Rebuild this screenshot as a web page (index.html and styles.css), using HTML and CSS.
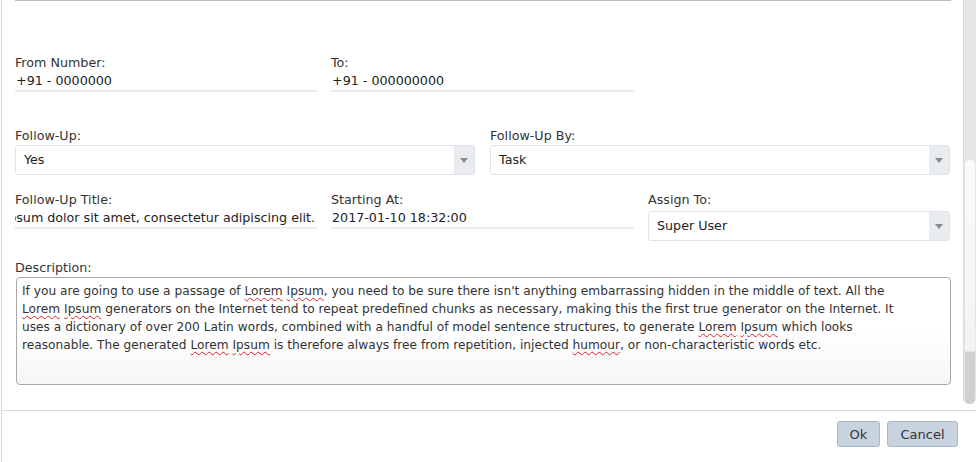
FILE: index.html
```html
<!DOCTYPE html>
<html>
<head>
<meta charset="utf-8">
<link rel="stylesheet" href="styles.css">
</head>
<body>
<div class="modal">
  <div class="body">
    <div class="content">
      <div class="topline"></div>
      <div class="row three row-first">
        <div class="field">
          <div class="label">From Number:</div>
          <div class="value">+91 - 0000000</div>
        </div>
        <div class="field">
          <div class="label">To:</div>
          <div class="value">+91 - 000000000</div>
        </div>
      </div>
      <div class="row two row-second">
        <div class="field">
          <div class="label">Follow-Up:</div>
          <div class="select"><span class="sel-text">Yes</span><span class="sel-arrow"><i class="tri"></i></span></div>
        </div>
        <div class="field">
          <div class="label">Follow-Up By:</div>
          <div class="select"><span class="sel-text">Task</span><span class="sel-arrow"><i class="tri"></i></span></div>
        </div>
      </div>
      <div class="row three row-third">
        <div class="field">
          <div class="label">Follow-Up Title:</div>
          <div class="value scrolled"><span>Lorem ipsum dolor sit amet, consectetur adipiscing elit.</span></div>
        </div>
        <div class="field">
          <div class="label">Starting At:</div>
          <div class="value">2017-01-10 18:32:00</div>
        </div>
        <div class="field">
          <div class="label">Assign To:</div>
          <div class="select sel-assign"><span class="sel-text">Super User</span><span class="sel-arrow"><i class="tri"></i></span></div>
        </div>
      </div>
      <div class="desc">
        <div class="label">Description:</div>
        <div class="textarea">If you are going to use a passage of <span class="sp">Lorem</span> <span class="sp">Ipsum</span>, you need to be sure there isn't anything embarrassing hidden in the middle of text. All the <span class="sp">Lorem</span> <span class="sp">Ipsum</span> generators on the Internet tend to repeat predefined chunks as necessary, making this the first true generator on the Internet. It uses a dictionary of over 200 Latin words, combined with a handful of model sentence structures, to generate <span class="sp">Lorem</span> <span class="sp">Ipsum</span> which looks reasonable. The generated <span class="sp">Lorem</span> <span class="sp">Ipsum</span> is therefore always free from repetition, injected <span class="sp">humour</span>, or non-characteristic words etc.</div>
      </div>
    </div>
    <div class="scrollbar"><div class="track"><div class="thumb"></div></div></div>
  </div>
  <div class="footer">
    <button class="btn btn-ok">Ok</button>
    <button class="btn btn-cancel">Cancel</button>
  </div>
</div>
</body>
</html>
```

FILE: styles.css
```css
html, body {
  margin: 0;
  padding: 0;
  background: #fff;
}
body {
  font-family: "DejaVu Sans", sans-serif;
  font-size: 12.7px;
  color: #333;
  width: 976px;
  height: 462px;
  overflow: hidden;
}
.modal {
  height: 462px;
  display: flex;
  flex-direction: column;
  border-left: 1px solid #d3d6db;
  margin-left: 1px;
  box-sizing: border-box;
}
.body {
  height: 410px;
  display: flex;
  flex-direction: row;
}
.content {
  flex: 1;
  padding: 0 12px 0 13px;
}
.topline {
  height: 0;
  border-top: 1px solid #bdbdbd;
  margin-bottom: 54px;
}
.row {
  display: grid;
}
.row.three {
  grid-template-columns: 302px 303px 302px;
  column-gap: 14px;
}
.row.two {
  grid-template-columns: 460px 460px;
  column-gap: 15px;
}
.row-second {
  margin-top: 36px;
}
.row-third {
  margin-top: 17px;
}
.field {
  display: flex;
  flex-direction: column;
  min-width: 0;
}
.label {
  line-height: 16px;
  color: #333;
  white-space: nowrap;
}
.value {
  line-height: 18px;
  color: #222;
  border-bottom: 2px solid #ebebeb;
  white-space: nowrap;
  padding-left: 1px;
  margin-top: 1px;
}
.scrolled {
  display: flex;
  justify-content: flex-end;
  overflow: hidden;
  padding-right: 2px;
}
.scrolled span {
  flex: none;
}
.select {
  display: flex;
  height: 28px;
  margin-top: 1px;
  border: 1px solid #dfe2e6;
  border-radius: 3px;
  background: #fff;
  overflow: hidden;
}
.sel-assign {
  margin-top: 3px;
}
.sel-text {
  flex: 1;
  line-height: 28px;
  padding-left: 8px;
  color: #222;
}
.sel-arrow {
  width: 20px;
  background: #e9ecef;
  display: flex;
  align-items: center;
  justify-content: center;
}
.tri {
  width: 0;
  height: 0;
  border-left: 4px solid transparent;
  border-right: 4px solid transparent;
  border-top: 5px solid #8a8a8a;
  margin-top: 1px;
}
.desc {
  margin-top: 19px;
}
.textarea {
  margin-top: 1px;
  height: 102px;
  margin-left: 1px;
  border: 1px solid #a9a9a9;
  border-radius: 4px;
  padding: 4px 48px 0 5px;
  font-size: 12.2px;
  line-height: 18px;
  color: #333;
  background: linear-gradient(to bottom, #ffffff 0%, #ffffff 50%, #f6f6f6 100%);
}
.sp {
  text-decoration: underline wavy #e02020;
  text-decoration-thickness: 1px;
  text-underline-offset: 2px;
}
.scrollbar {
  width: 13px;
  flex: none;
  padding-bottom: 6px;
}
.track {
  height: 100%;
  box-sizing: border-box;
  background: #e6e6e6;
  border-left: 1px solid #d8d8d8;
  border-radius: 0 0 6px 6px;
  position: relative;
}
.thumb {
  position: absolute;
  left: 1px;
  right: 1px;
  top: 160px;
  bottom: 0;
  border-radius: 6px;
  background: linear-gradient(to bottom, #fafafa 0%, #f3f3f3 78%, #cfcfcf 79%, #cfcfcf 100%);
}
.footer {
  flex: 1;
  border-top: 1px solid #d9d9d9;
  display: flex;
  justify-content: flex-end;
  align-items: flex-start;
  padding: 10px 18px 0 0;
  gap: 7px;
}
.btn {
  font-family: "DejaVu Sans", sans-serif;
  font-size: 13px;
  height: 26px;
  color: #333;
  background: #c8d3e0;
  border: 1px solid #a9b7c8;
  border-radius: 3px;
  padding: 0;
  margin: 0;
}
.btn-ok {
  width: 43px;
}
.btn-cancel {
  width: 71px;
}
```
